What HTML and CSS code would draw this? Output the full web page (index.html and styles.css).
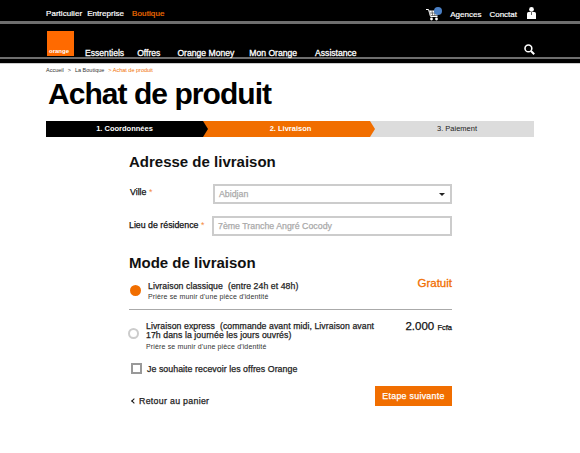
FILE: index.html
```html
<!DOCTYPE html>
<html lang="fr">
<head>
    <meta charset="UTF-8">
    <title>Achat de produit</title>
    <link rel="stylesheet" href="styles.css">
</head>
<body>
    <header class="header">
        <div class="topbar">
            <nav class="topnav">
                <a>Particulier</a>
                <a>Entreprise</a>
                <a class="active">Boutique</a>
            </nav>
            <div class="toptools">
                <span class="cart">
                    <svg width="16" height="13" viewBox="0 0 16 13">
                        <path d="M0 1.5h2.5l2 7h7" fill="none" stroke="#fff" stroke-width="1"/>
                        <path d="M3.2 2.5h10l-1.6 5H4.6z" fill="#fff"/>
                        <path d="M6 2.5l.6 5M9 2.5l-.2 5M3.6 5h9" stroke="#000" stroke-width="0.5"/>
                        <circle cx="5.5" cy="11" r="1.4" fill="#fff"/>
                        <circle cx="10.5" cy="11" r="1.4" fill="#fff"/>
                    </svg>
                    <span class="cart-dot"></span>
                </span>
                <a class="agences">Agences</a>
                <a class="contact">Conctat</a>
                <svg class="user" width="9" height="12" viewBox="0 0 9 12">
                    <circle cx="4.5" cy="2.4" r="2.4" fill="#fff"/>
                    <path d="M0 12V6.5Q0 5 1.5 5h6Q9 5 9 6.5V12z" fill="#fff"/>
                    <path d="M4.5 5v3" stroke="#000" stroke-width="0.6"/>
                </svg>
            </div>
        </div>
        <div class="mainbar">
            <div class="logo"><span>orange</span></div>
            <nav class="mainnav">
                <a class="n1">Essentiels</a>
                <a class="n2">Offres</a>
                <a class="n3">Orange Money</a>
                <a class="n4">Mon Orange</a>
                <a>Assistance</a>
            </nav>
            <svg class="search" width="11" height="11" viewBox="0 0 11 11">
                <circle cx="4.4" cy="4.4" r="3.4" fill="none" stroke="#fff" stroke-width="1.6"/>
                <path d="M7 7l3.2 3.2" stroke="#fff" stroke-width="2"/>
            </svg>
        </div>
        <div class="bottomstrip"></div>
    </header>

    <main class="page">
        <div class="crumbs">
            <a>Accueil</a><span class="sep">&gt;</span><a>La Boutique</a><span class="current">&gt; Achat de produit</span>
        </div>
        <h1>Achat de produit</h1>

        <div class="steps">
            <div class="step step-done">1. Coordonnées</div>
            <div class="step step-now">2. Livraison</div>
            <div class="step step-next">3. Paiement</div>
        </div>

        <form class="checkout">
            <h2>Adresse de livraison</h2>
            <div class="form-group form-group-1">
                <label>Ville <i>*</i></label>
                <div class="field field-select">Abidjan<span class="caret"></span></div>
            </div>
            <div class="form-group form-group-2">
                <label>Lieu de résidence <i>*</i></label>
                <div class="field field-wide">7ème Tranche Angré Cocody</div>
            </div>

            <h2 class="mode-title">Mode de livraison</h2>
            <div class="option option-first">
                <span class="radio radio-on"></span>
                <div class="option-text">
                    <p class="option-name">Livraison classique&nbsp; (entre 24h et 48h)</p>
                    <p class="option-note">Prière se munir d'une pièce d'identité</p>
                </div>
                <div class="free">Gratuit</div>
            </div>
            <div class="option option-second">
                <span class="radio"></span>
                <div class="option-text">
                    <p class="option-name">Livraison express&nbsp; (commande avant midi, Livraison avant 17h dans la journée les jours ouvrés)</p>
                    <p class="option-note">Prière se munir d'une pièce d'identité</p>
                </div>
                <div class="price">2.000 <small>Fcfa</small></div>
            </div>
            <label class="offers"><span class="checkbox"></span>Je souhaite recevoir les offres Orange</label>
            <div class="actions">
                <a class="back"><span class="chev"></span>Retour au panier</a>
                <button type="button">Etape suivante</button>
            </div>
        </form>
    </main>
</body>
</html>
```

FILE: styles.css
```css
* {
    box-sizing: border-box;
}
body {
    margin: 0;
    font-family: "Liberation Sans", Arial, sans-serif;
    color: #111;
    background: #fff;
}
p, h1, h2 {
    margin: 0;
}

/* header */
.header {
    background: #000;
    color: #fff;
}
.topbar {
    height: 24px;
    padding: 0 44px 0 46px;
    display: flex;
    justify-content: space-between;
    border-bottom: 3px solid #6e6e6e;
    font-size: 8px;
    -webkit-text-stroke: 0.2px;
}
.topnav {
    display: flex;
    gap: 5px;
    padding-top: 9px;
    letter-spacing: 0.05px;
}
.topnav a:last-child {
    margin-left: 3px;
}
.topnav .active {
    color: #f16e00;
    letter-spacing: 0.1px;
}
.toptools {
    display: flex;
    align-items: flex-start;
    padding-top: 7px;
}
.cart {
    position: relative;
    width: 16px;
    margin-right: 8px;
    margin-top: 1px;
}
.cart-dot {
    position: absolute;
    top: -1px;
    left: 8px;
    width: 8px;
    height: 8px;
    border-radius: 50%;
    background: #4a7fc4;
}
.agences, .contact {
    padding-top: 3px;
    margin-right: 8px;
}
.contact {
    margin-right: 10px;
}
.mainbar {
    height: 33px;
    padding: 7px 46px 0 47px;
    display: flex;
    align-items: flex-start;
}
.logo {
    width: 27px;
    height: 25px;
    background: #ff6a00;
    display: flex;
    align-items: flex-end;
    padding: 0 0 1px 2px;
    font-size: 6px;
    line-height: 7px;
    font-weight: bold;
}
.mainnav {
    display: flex;
    font-size: 8.6px;
    padding-top: 17px;
    margin-left: 11px;
    -webkit-text-stroke: 0.3px;
}
.n1 { margin-right: 13px; }
.n2 { margin-right: 17px; }
.n3 { margin-right: 15px; }
.n4 { margin-right: 18px; }
.search {
    margin-left: auto;
    margin-top: 13px;
    margin-right: -1px;
}
.bottomstrip {
    height: 7px;
    border-top: 2px solid #6e6e6e;
    border-bottom: 1px solid #ccc;
}

/* page */
.page {
    padding: 0 46px;
}
.crumbs {
    padding-top: 3px;
    font-size: 5.5px;
    line-height: 7px;
    color: #333;
}
.crumbs .sep {
    margin: 0 4px;
}
.crumbs .current {
    margin-left: 4px;
    color: #f16e00;
}
h1 {
    font-size: 30px;
    line-height: 36px;
    margin: 2px 0 0 2px;
    letter-spacing: -0.95px;
    color: #000;
}
.steps {
    display: flex;
    height: 16px;
    margin-top: 9px;
    font-size: 7.5px;
    line-height: 16px;
    text-align: center;
    background: #dcdcdc;
}
.step {
    position: relative;
}
.step-done {
    width: 157px;
    background: #000;
    color: #fff;
    font-weight: bold;
}
.step-now {
    width: 167px;
    padding-left: 8px;
    background: #f16e00;
    color: #fff;
    font-weight: bold;
}
.step-next {
    flex: 1;
    color: #222;
    padding-left: 10px;
}
.step-done::after, .step-now::after {
    content: "";
    position: absolute;
    top: 0;
    right: -5px;
    width: 5px;
    height: 16px;
    clip-path: polygon(0 0, 100% 50%, 0 100%);
    z-index: 2;
}
.step-done::after { background: #000; }
.step-now::after { background: #f16e00; }

.checkout {
    width: 323px;
    margin-left: 83px;
}
h2 {
    font-size: 15px;
    line-height: 18px;
    margin-top: 16px;
    color: #111;
}
.form-group {
    display: flex;
    align-items: center;
    margin-top: 13px;
    font-size: 8.8px;
    -webkit-text-stroke: 0.25px;
}
.form-group label {
    width: 84px;
    padding-bottom: 2px;
}
.form-group-1 label {
    padding-bottom: 4px;
    padding-left: 1px;
}
.form-group-2 {
    margin-top: 12px;
}
.form-group i {
    color: #f58a3c;
    font-style: normal;
    -webkit-text-stroke: 0;
}
.field {
    flex: 1;
    height: 20px;
    border: 2px solid #ccc;
    font-size: 8.8px;
    line-height: 16px;
    padding-left: 4px;
    color: #aaa;
    position: relative;
}
.field-wide {
    margin-left: -1px;
}
.caret {
    position: absolute;
    right: 5px;
    top: 7px;
    border: 3px solid transparent;
    border-top: 3px solid #222;
}
.mode-title {
    margin-top: 18px;
}
.option {
    display: flex;
    position: relative;
}
.option-first {
    height: 28px;
    margin-top: 10px;
    padding-left: 19px;
    border-bottom: 1px solid #aaa;
}
.option-second {
    margin-top: 12px;
    padding-left: 17px;
}
.option-name {
    font-size: 8.7px;
    line-height: 8.5px;
    letter-spacing: 0.08px;
    color: #222;
    -webkit-text-stroke: 0.25px;
}
.option-note {
    font-size: 7px;
    letter-spacing: 0.15px;
    line-height: 8px;
    color: #333;
    margin-top: 2px;
}
.option-second .option-note {
    margin-top: 4px;
}
.option-second .option-text {
    width: 240px;
}
.radio {
    position: absolute;
    left: 1px;
    top: 3px;
    width: 11px;
    height: 11px;
    border-radius: 50%;
    border: 2px solid #ccc;
}
.radio-on {
    background: #f16e00;
    border-color: #f16e00;
}
.option-second .radio {
    left: -1px;
    top: 6px;
}
.free {
    margin-left: auto;
    margin-top: -5px;
    font-size: 11.5px;
    color: #f16e00;
    -webkit-text-stroke: 0.3px;
}
.price {
    margin-left: auto;
    font-size: 11.5px;
    line-height: 9px;
    -webkit-text-stroke: 0.25px;
}
.price small {
    font-size: 7.5px;
}
.offers {
    display: flex;
    align-items: center;
    gap: 5px;
    margin-top: 12px;
    margin-left: 2px;
    font-size: 8.8px;
    letter-spacing: 0.05px;
    color: #222;
    -webkit-text-stroke: 0.25px;
}
.checkbox {
    width: 11px;
    height: 11px;
    border: 2px solid #999;
}
.actions {
    display: flex;
    justify-content: space-between;
    align-items: center;
    margin-top: 12px;
}
.back {
    margin: 10px 0 0 2px;
    font-size: 8.8px;
    letter-spacing: 0.3px;
    color: #222;
    -webkit-text-stroke: 0.25px;
}
.chev {
    display: inline-block;
    width: 4px;
    height: 4px;
    margin: 0 3px 1px 1px;
    border-left: 1px solid #111;
    border-bottom: 1px solid #111;
    transform: rotate(45deg);
}
button {
    width: 77px;
    height: 20px;
    padding: 0;
    background: #f16e00;
    color: #fff;
    border: none;
    font-family: inherit;
    font-size: 8.8px;
    letter-spacing: 0.3px;
    -webkit-text-stroke: 0.25px #fff;
}
```
